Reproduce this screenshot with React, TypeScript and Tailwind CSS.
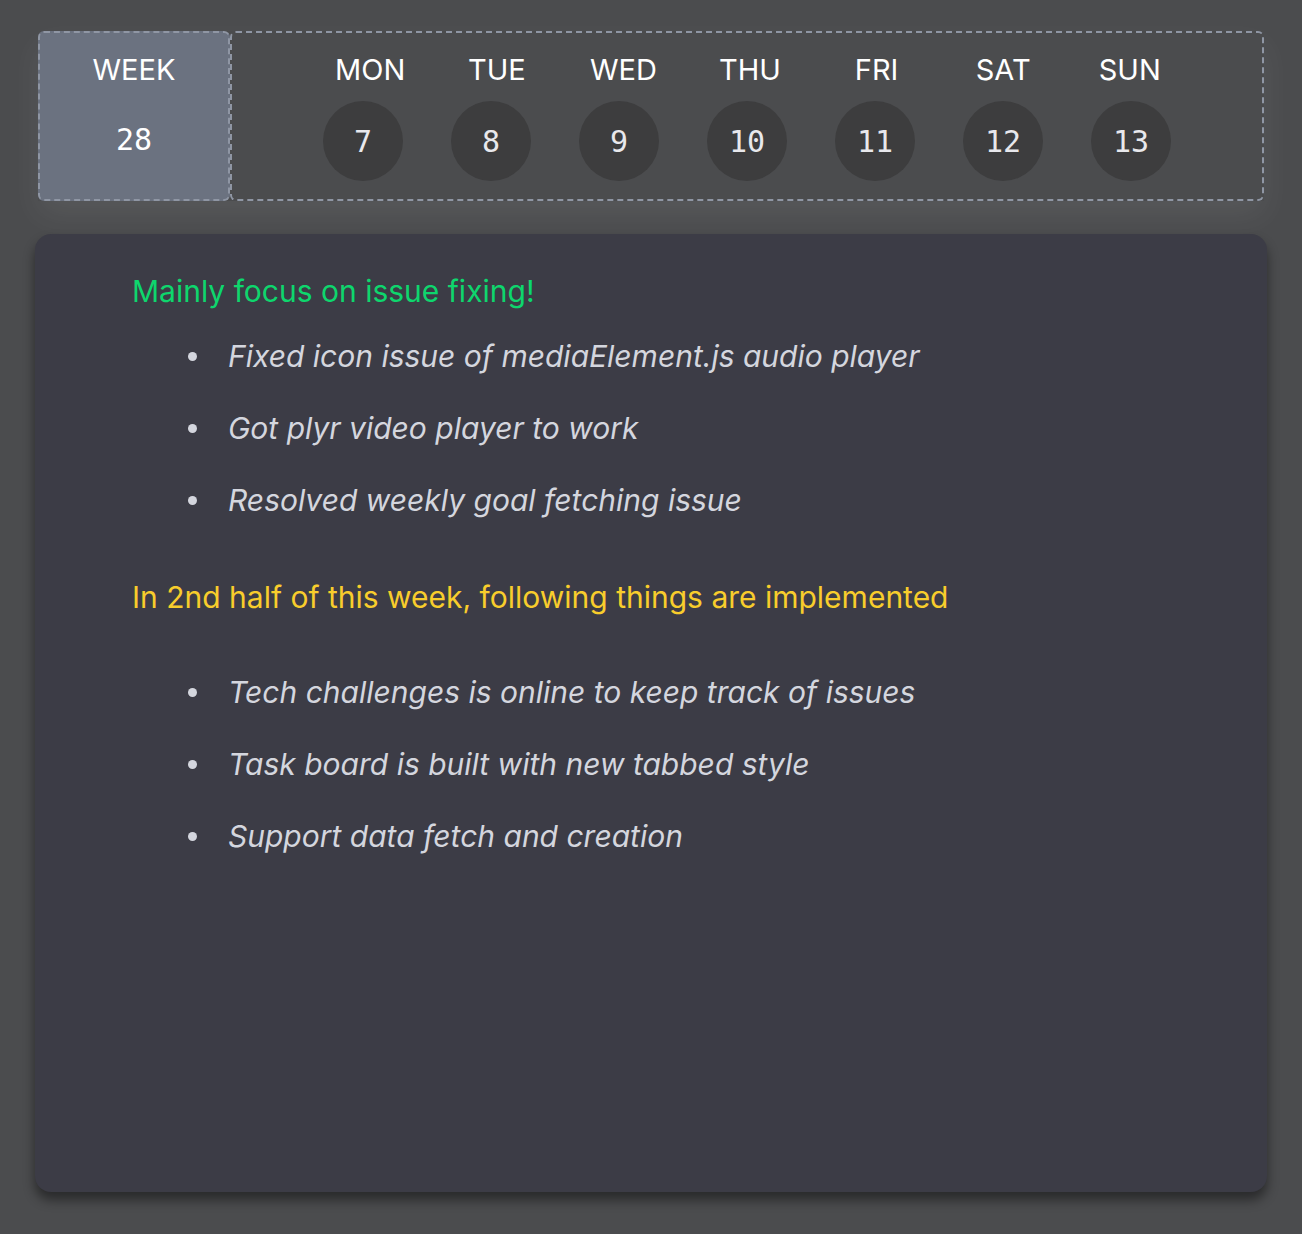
const days = [
  { name: "MON", date: 7 },
  { name: "TUE", date: 8 },
  { name: "WED", date: 9 },
  { name: "THU", date: 10 },
  { name: "FRI", date: 11 },
  { name: "SAT", date: 12 },
  { name: "SUN", date: 13 },
];

const firstHalf = [
  "Fixed icon issue of mediaElement.js audio player",
  "Got plyr video player to work",
  "Resolved weekly goal fetching issue",
];

const secondHalf = [
  "Tech challenges is online to keep track of issues",
  "Task board is built with new tabbed style",
  "Support data fetch and creation",
];

function GoalList({ items }: { items: string[] }) {
  return (
    <ul className="flex flex-col gap-[29px] pl-[56px]">
      {items.map((item) => (
        <li key={item} className="flex items-center gap-[31px]">
          <span className="h-[9px] w-[9px] rounded-full bg-[#d4d6de]"></span>
          <span className="text-[30px] italic leading-[43px] text-[#d4d6de]">{item}</span>
        </li>
      ))}
    </ul>
  );
}

function App() {
  return (
    <div
      className="min-h-[1234px] bg-[#4b4c4e] px-[35px] pt-[31px] pb-[40px]"
      style={{ fontFamily: "Inter, 'Noto Sans', sans-serif" }}
    >
      <header className="mx-[3px] flex h-[170px] shadow-[0_14px_30px_rgba(255,255,255,0.07)]">
        <div className="flex w-[192px] flex-col items-center rounded-md border-2 border-dashed border-[#8f96a4] bg-[#6b7280] pt-[18px] text-white">
          <span className="text-[29px] leading-[38px]">WEEK</span>
          <span className="mt-[33px] font-['DejaVu_Sans_Mono'] text-[30px] leading-[36px]">28</span>
        </div>
        <div className="flex flex-1 flex-col items-center rounded-md border-2 border-dashed border-[#8f96a4] bg-[#4b4c4e] pt-[18px]">
          <div className="flex pl-[6px] text-white">
            {days.map((day) => (
              <span key={day.name} className="w-[126.6px] text-center text-[29px] leading-[38px]">
                {day.name}
              </span>
            ))}
          </div>
          <div className="mt-[12px] flex gap-[48px]">
            {days.map((day) => (
              <span
                key={day.date}
                className="flex h-[80px] w-[80px] items-center justify-center rounded-full bg-[#3d3d3e] font-['DejaVu_Sans_Mono'] text-[30px] text-[#e8e8ec]"
              >
                {day.date}
              </span>
            ))}
          </div>
        </div>
      </header>

      <main className="mt-[33px] h-[958px] rounded-[16px] bg-[#3c3c46] pt-[37px] pl-[97px] shadow-[0_8px_12px_rgba(0,0,0,0.45)]">
        <h2 className="text-[30px] leading-[40px] text-[#0ed66d]">Mainly focus on issue fixing!</h2>
        <div className="mt-[24px]">
          <GoalList items={firstHalf} />
        </div>
        <h2 className="mt-[55px] text-[30px] leading-[40px] text-[#f8cd2c]">
          In 2nd half of this week, following things are implemented
        </h2>
        <div className="mt-[54px]">
          <GoalList items={secondHalf} />
        </div>
      </main>
    </div>
  );
}

export default App;
